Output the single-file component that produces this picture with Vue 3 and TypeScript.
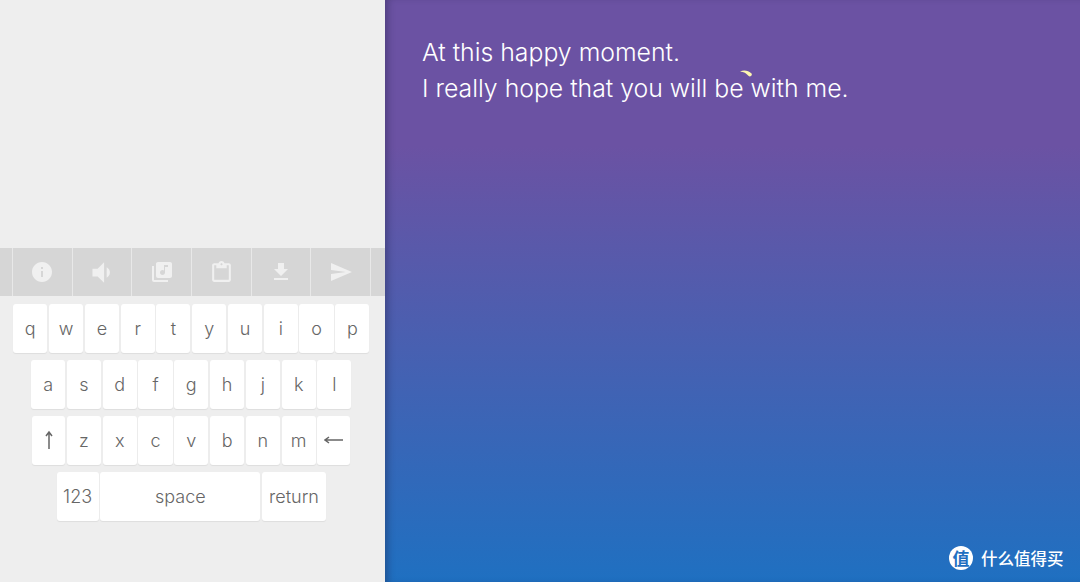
<script setup lang="ts">
// keyboard rows, the odd keys get their own class
const topRow = ['q', 'w', 'e', 'r', 't', 'y', 'u', 'i', 'o', 'p']
const midRow = ['a', 's', 'd', 'f', 'g', 'h', 'j', 'k', 'l']
const lowRow = ['z', 'x', 'c', 'v', 'b', 'n', 'm']

const tools = [
  { size: 24, d: 'M12 2C6.48 2 2 6.48 2 12s4.48 10 10 10 10-4.48 10-10S17.52 2 12 2zm1 15h-2v-6h2v6zm0-8h-2V7h2v2z' },
  { size: 31, d: 'M18.5 12c0-1.77-1.02-3.29-2.5-4.03v8.05c1.48-.73 2.5-2.25 2.5-4.02zM5 9v6h4l5 5V4L9 9H5z' },
  { size: 24, d: 'M20 2H8c-1.1 0-2 .9-2 2v12c0 1.1.9 2 2 2h12c1.1 0 2-.9 2-2V4c0-1.1-.9-2-2-2zm-2 5h-3v5.5c0 1.38-1.12 2.5-2.5 2.5S10 13.88 10 12.5s1.12-2.5 2.5-2.5c.57 0 1.08.19 1.5.51V5h4v2zM4 6H2v14c0 1.1.9 2 2 2h14v-2H4V6z' },
  { size: 25, d: 'M19 3h-4.18C14.4 1.84 13.3 1 12 1s-2.4.84-2.82 2H5c-1.1 0-2 .9-2 2v14c0 1.1.9 2 2 2h14c1.1 0 2-.9 2-2V5c0-1.1-.9-2-2-2zm-7 0c.55 0 1 .45 1 1s-.45 1-1 1-1-.45-1-1 .45-1 1-1zm7 16H5V5h2v3h10V5h2v14z' },
  { size: 24, d: 'M19 9h-4V3H9v6H5l7 7 7-7zM5 18v2h14v-2H5z' },
  { size: 24, d: 'M2.01 21L23 12 2.01 3 2 10l15 2-15 2z' },
]
</script>

<template>
  <div class="screen">
    <section class="left">
      <div class="toolbar">
        <div v-for="(t, i) in tools" :key="i" class="tool">
          <svg viewBox="0 0 24 24" :width="t.size" :height="t.size"><path :d="t.d" /></svg>
        </div>
      </div>
      <div class="keyboard">
        <div class="row">
          <div v-for="k in topRow" :key="k" class="key">{{ k }}</div>
        </div>
        <div class="row">
          <div v-for="k in midRow" :key="k" class="key">{{ k }}</div>
        </div>
        <div class="row">
          <div class="key key-side">
            <svg viewBox="0 0 14 20" width="14" height="20">
              <path d="M7 19V2M4 6l3-4 3 4" />
            </svg>
          </div>
          <div v-for="k in lowRow" :key="k" class="key">{{ k }}</div>
          <div class="key key-side">
            <svg viewBox="0 0 20 14" width="20" height="14">
              <path d="M19 7H1M5 4L1 7l4 3" />
            </svg>
          </div>
        </div>
        <div class="row">
          <div class="key key-num">123</div>
          <div class="key key-space">space</div>
          <div class="key key-return">return</div>
        </div>
      </div>
    </section>

    <section class="right">
      <p class="message">At this happy moment.<br />I really hope that you will be with me.</p>
      <svg class="comet" viewBox="0 0 12 7" width="12" height="7">
        <path d="M0 1.4C4 -.2 8 .2 11.8 3.8 12.2 6 9.8 7.4 8.4 5.8 6.4 3.2 4 1.8 0 1.4z" />
      </svg>
      <div class="brand">
        <span class="brand-logo">值</span>
        <span class="brand-name">什么值得买</span>
      </div>
    </section>
  </div>
</template>

<style>
html, body {
  margin: 0;
  overflow: hidden;
}
</style>

<style scoped>
.screen {
  display: flex;
  width: 1080px;
  height: 582px;
  font-family: Inter, "Noto Sans", sans-serif;
}

.left {
  width: 385px;
  background: #eeeeee;
  padding-top: 248px;
  box-sizing: border-box;
}

.toolbar {
  display: flex;
  height: 48px;
  padding-left: 12px;
  background: #d6d6d6;
}

.tool {
  width: 59.67px;
  box-sizing: border-box;
  display: flex;
  align-items: center;
  justify-content: center;
  border-left: 1px solid #e8e8e8;
}
.tool:last-child {
  width: 60.67px;
  border-right: 1px solid #e8e8e8;
}
.tool svg path {
  fill: #f0f0f0;
}

.keyboard {
  width: 382.6px;
  padding-top: 8px;
  display: flex;
  flex-direction: column;
  gap: 7.5px;
}

.row {
  display: flex;
  justify-content: center;
  gap: 1.7px;
}

.key {
  width: 34.1px;
  height: 48.5px;
  display: flex;
  align-items: center;
  justify-content: center;
  background: #ffffff;
  border-radius: 3px;
  box-shadow: 0 1px 1px rgba(0, 0, 0, 0.07);
  color: #666666;
  font-size: 18px;
  font-weight: 300;
}
.key svg path {
  fill: none;
  stroke: #666666;
  stroke-width: 1.5;
}

.key-side {
  width: 33px;
}
.key-num {
  width: 42px;
}
.key-space {
  width: 160px;
}
.key-return {
  width: 64px;
}

.right {
  position: relative;
  flex: 1;
  background: linear-gradient(180deg, #6b52a3 0%, #6b52a3 25%, #1f70c1 100%);
  box-shadow: inset 6px 0 7px -3px rgba(30, 30, 60, 0.35);
}

.message {
  margin: 0;
  padding: 34px 0 0 37px;
  color: #ffffff;
  font-size: 24.8px;
  font-weight: 340;
  line-height: 36px;
}

.comet {
  position: absolute;
  left: 355px;
  top: 70px;
}
.comet path {
  fill: #fdf6b0;
}

.brand {
  position: absolute;
  left: 564px;
  top: 546px;
  display: flex;
  align-items: center;
  gap: 8px;
}

.brand-logo {
  width: 24px;
  height: 24px;
  border-radius: 50%;
  background: #ffffff;
  color: #1f70c1;
  font-family: "Noto Sans CJK SC", sans-serif;
  font-size: 17px;
  font-weight: 700;
  line-height: 24px;
  text-align: center;
}

.brand-name {
  color: #ffffff;
  font-family: "Noto Sans CJK SC", sans-serif;
  font-size: 16.5px;
  font-weight: 500;
  line-height: 24px;
}
</style>
